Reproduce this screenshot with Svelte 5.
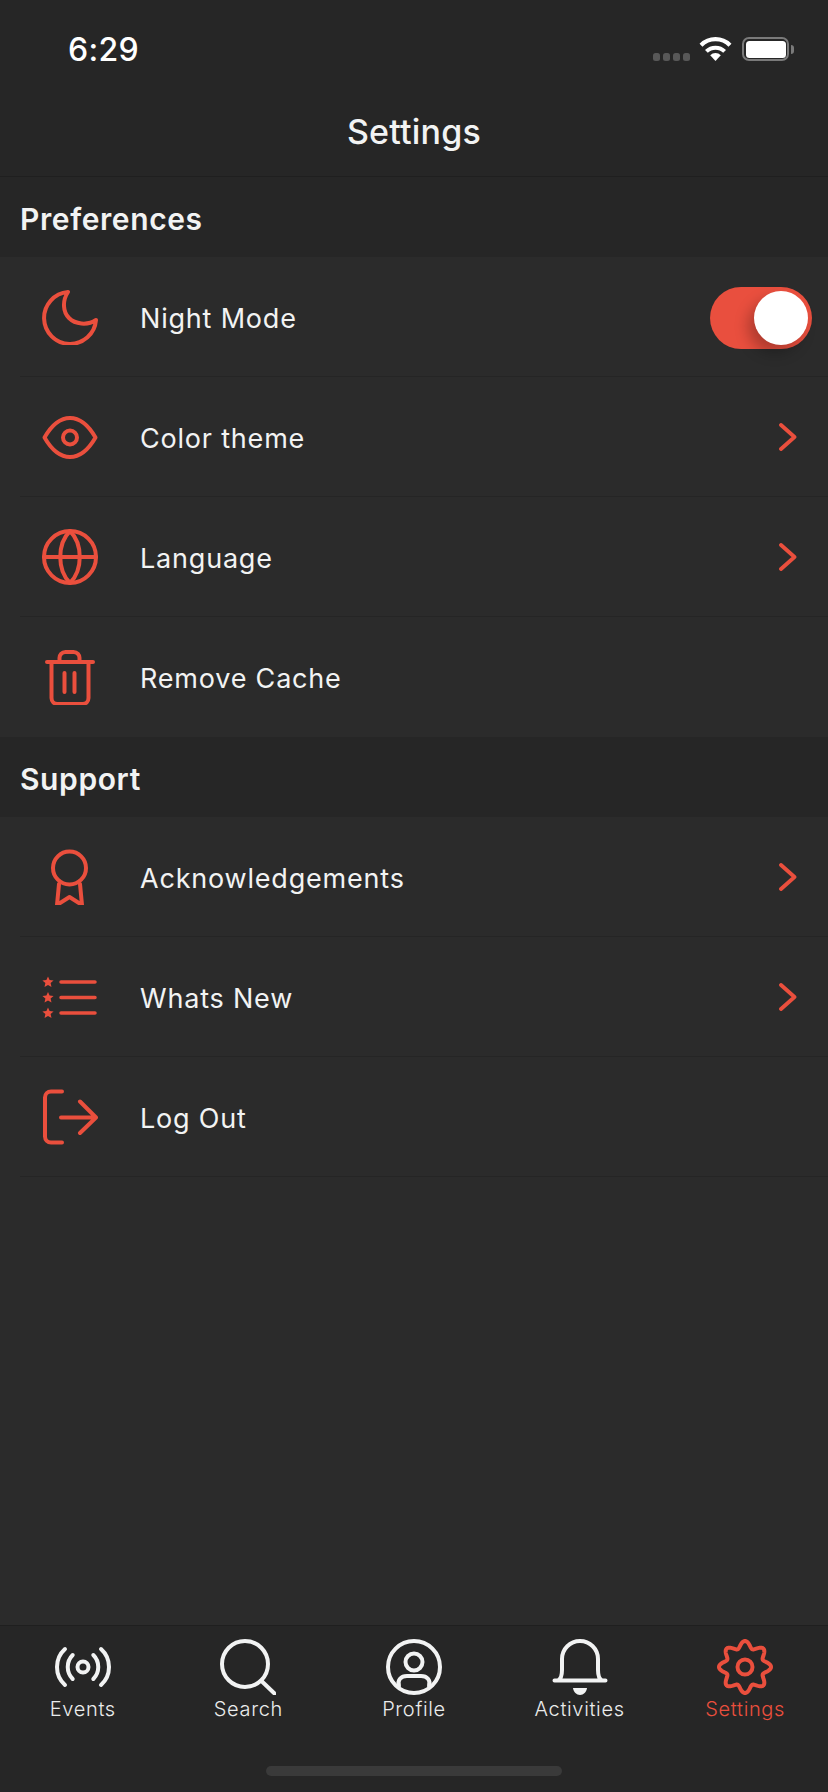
<script>
  const pts = [];
  const N = 240;
  for (let i = 0; i < N; i++) {
    const t = (i / N) * Math.PI * 2;
    const c = Math.cos(8 * t);
    const r = 22.6 + 3.4 * c;
    pts.push(`${(28 + r * Math.sin(t)).toFixed(2)} ${(28 - r * Math.cos(t)).toFixed(2)}`);
  }
  const gear = 'M' + pts.join('L') + 'Z';

  const groups = [
    {
      title: 'Preferences',
      rows: [
        { id: 'moon', label: 'Night Mode', toggle: true },
        { id: 'eye', label: 'Color theme', chevron: true },
        { id: 'globe', label: 'Language', chevron: true },
        { id: 'trash', label: 'Remove Cache' }
      ]
    },
    {
      title: 'Support',
      rows: [
        { id: 'ribbon', label: 'Acknowledgements', chevron: true },
        { id: 'list', label: 'Whats New', chevron: true },
        { id: 'logout', label: 'Log Out' }
      ]
    }
  ];
  const tabs = ['Events', 'Search', 'Profile', 'Activities', 'Settings'];
  const star = 'M0 -5.6L1.6 -1.9L5.6 -1.6L2.6 1L3.5 5L0 2.9L-3.5 5L-2.6 1L-5.6 -1.6L-1.6 -1.9Z';
</script>

<div class="screen">
  <header class="top">
    <div class="status">
      <span class="time">6:29</span>
      <div class="status-icons">
        <div class="dots"><i></i><i></i><i></i><i></i></div>
        <svg class="wifi" width="33" height="24" viewBox="0 0 33 24">
          <path d="M16.5 24L11.2 18.2A7.8 7.8 0 0 1 21.8 18.2Z" fill="#fff" />
          <path d="M7.4 14.4A13 13 0 0 1 25.6 14.4" fill="none" stroke="#fff" stroke-width="4" />
          <path d="M2 8.200A20.5 20.5 0 0 1 31 8.200" fill="none" stroke="#fff" stroke-width="4.200" />
        </svg>
        <div class="battery"><div class="charge"></div></div>
        <div class="nub"></div>
      </div>
    </div>
    <h1>Settings</h1>
  </header>

  <main>
    {#each groups as g}
      <section>
        <h2>{g.title}</h2>
        {#each g.rows as r}
          <div class="row">
            <svg class="icon" width="56" height="56" viewBox="0 0 56 56">
              {#if r.id === 'moon'}
                <path d="M26 3A26 26 0 1 0 54 31C45 37 33 35 27 29C21 23 20 12 26 3Z" />
              {:else if r.id === 'eye'}
                <path d="M2.500 28.500C10 15.500 18 9 28 9S46 15.500 53.500 28.500C46 41.500 38 48 28 48S10 41.500 2.500 28.500Z" />
                <circle cx="28" cy="28.500" r="7" />
              {:else if r.id === 'globe'}
                <circle cx="28" cy="28" r="26" />
                <path d="M2 28H54M28 2C15 15 15 41 28 54C41 41 41 15 28 2Z" />
              {:else if r.id === 'trash'}
                <path d="M5 13H51M17.500 13V9.500A6 6 0 0 1 23.500 3H31.500A6 6 0 0 1 37.500 9.500V13M9.500 13V49A6 6 0 0 0 15.500 55H40.500A6 6 0 0 0 46.500 49V13M22.500 24V43M32.500 24V43" />
              {:else if r.id === 'ribbon'}
                <circle cx="27.500" cy="19" r="16.500" />
                <path d="M17 35L15 56L27.500 48L40 56L38 35" />
              {:else if r.id === 'list'}
                <path d="M19 13H53M19 28.500H53M19 44H53" class="thin" />
                <path d={star} class="solid" transform="translate(6 13)" />
                <path d={star} class="solid" transform="translate(6 28.500)" />
                <path d={star} class="solid" transform="translate(6 44)" />
              {:else if r.id === 'logout'}
                <path d="M20 2.500H9A6 6 0 0 0 3 8.500V47.500A6 6 0 0 0 9 53.500H20M19 28.500H53M38 12.500L54 28.500L38 44" />
              {/if}
            </svg>
            <span class="label">{r.label}</span>
            {#if r.toggle}
              <div class="switch"><div class="knob"></div></div>
            {/if}
            {#if r.chevron}
              <svg class="chev" width="18" height="28" viewBox="0 0 18 28">
                <path d="M2 2L15.500 14L2 26" />
              </svg>
            {/if}
          </div>
        {/each}
      </section>
    {/each}
  </main>

  <nav class="tabbar">
    <div class="tabs">
      {#each tabs as t, i}
        <div class="tab" class:active={i === 4}>
          <svg width="56" height="56" viewBox="0 0 56 56">
            {#if i === 0}
              <circle cx="28" cy="28" r="5.500" />
              <path d="M10 10A24.250 24.250 0 0 0 10 46M46 10A24.250 24.250 0 0 1 46 46M17.700 16A17 17 0 0 0 17.700 40M38.300 16A17 17 0 0 1 38.300 40" />
            {:else if i === 1}
              <circle cx="25" cy="25" r="23" />
              <path d="M42 42.500L54.500 54.500" />
            {:else if i === 2}
              <circle cx="28" cy="28" r="26" />
              <circle cx="28" cy="23" r="8.500" />
              <path d="M13 47C11 41 15 37 21 37H35C41 37 45 41 43 47" />
            {:else if i === 3}
              <path d="M2.500 41.500H53.500M6 41.500C9 40 10 36 10 31V20A18 18 0 0 1 46 20V31C46 36 47 40 50 41.500" />
              <path d="M21 49H35C34.500 53 31.500 56 28 56S21.500 53 21 49Z" class="solid" />
            {:else}
              <path d={gear} />
              <circle cx="28" cy="28" r="7.500" />
            {/if}
          </svg>
          <span>{t}</span>
        </div>
      {/each}
    </div>
    <div class="home"></div>
  </nav>
</div>

<style>
  :global(body) {
    margin: 0;
    background: #2b2b2b;
  }
  .screen {
    width: 828px;
    height: 1792px;
    display: flex;
    flex-direction: column;
    background: #2b2b2b;
    color: #f2f3f3;
    font-family: Inter, "Noto Sans", sans-serif;
    overflow: hidden;
  }
  .top {
    height: 176px;
    background: #262626;
    border-bottom: 1px solid #1f1f1f;
    box-sizing: content-box;
    display: flex;
    flex-direction: column;
  }
  .status {
    height: 100px;
    display: flex;
    align-items: flex-start;
    justify-content: space-between;
  }
  .time {
    margin: 30px 0 0 68px;
    font-size: 32px;
    line-height: 40px;
    font-weight: 500;
    color: #fff;
    letter-spacing: 0.3px;
  }
  .status-icons {
    display: flex;
    align-items: flex-start;
    margin: 37px 34px 0 0;
  }
  .dots {
    display: flex;
    gap: 3px;
    margin: 16px 9px 0 0;
  }
  .dots i {
    display: block;
    width: 7px;
    height: 8px;
    border-radius: 2.500px;
    background: #585858;
  }
  .battery {
    width: 47px;
    height: 24px;
    margin-left: 10px;
    box-sizing: border-box;
    border: 2.500px solid #7a7a7a;
    border-radius: 7px;
    padding: 1.500px;
    display: flex;
  }
  .charge {
    flex: 1;
    background: #fff;
    border-radius: 3.500px;
  }
  .nub {
    width: 3px;
    height: 9px;
    margin: 8px 0 0 2px;
    background: #7a7a7a;
    border-radius: 0 3px 3px 0;
  }
  h1 {
    margin: 12px 0 0;
    text-align: center;
    font-size: 34px;
    line-height: 40px;
    font-weight: 500;
    letter-spacing: 0.2px;
    color: #f2f3f3;
  }
  main {
    flex: 1;
  }
  h2 {
    margin: 0;
    height: 80px;
    box-sizing: border-box;
    background: #262626;
    padding: 4px 0 0 20px;
    font-size: 30px;
    line-height: 76px;
    font-weight: 600;
    letter-spacing: 0.6px;
  }
  .row {
    height: 120px;
    margin-left: 20px;
    border-bottom: 1px solid #252525;
    box-sizing: border-box;
    display: flex;
    align-items: center;
    padding: 0 31px 0 22px;
  }
  section .row:last-child {
    border-bottom-color: transparent;
  }
  section:last-child .row:last-child {
    border-bottom-color: #252525;
  }
  .icon,
  .tab svg {
    flex: none;
    fill: none;
    stroke-width: 4;
    stroke-linecap: round;
    stroke-linejoin: round;
  }
  .icon {
    margin-top: 1px;
  }
  .icon,
  .chev {
    stroke: #ea4f3d;
  }
  .icon .thin {
    stroke-width: 3.500;
  }
  .solid {
    stroke: none;
    fill: #ea4f3d;
  }
  .label {
    margin-left: 42px;
    padding-top: 5px;
    flex: 1;
    font-size: 27px;
    letter-spacing: 0.8px;
    line-height: 40px;
  }
  .chev {
    fill: none;
    stroke-width: 3.800;
    stroke-linecap: round;
    stroke-linejoin: round;
  }
  .switch {
    position: relative;
    width: 102px;
    height: 62px;
    margin: 3px -15px 0 0;
    border-radius: 31px;
    background: #e94f3e;
  }
  .knob {
    position: absolute;
    top: 4px;
    right: 4px;
    width: 54px;
    height: 54px;
    border-radius: 50%;
    background: #fff;
    box-shadow: -6px 8px 14px rgba(0, 0, 0, 0.25);
  }
  .tabbar {
    height: 167px;
    background: #262626;
    border-top: 1px solid #1f1f1f;
    box-sizing: border-box;
    padding-top: 13px;
    display: flex;
    flex-direction: column;
    align-items: center;
  }
  .tabs {
    width: 100%;
    display: grid;
    grid-template-columns: repeat(5, 1fr);
  }
  .tab {
    display: flex;
    flex-direction: column;
    align-items: center;
    font-size: 20px;
    font-weight: 350;
    letter-spacing: 0.65px;
    line-height: 28px;
    color: #ebecec;
  }
  .tab svg {
    stroke: #f2f3f3;
  }
  .tab .solid {
    stroke: none;
    fill: #f2f3f3;
  }
  .tab.active {
    color: #ea4f3d;
  }
  .tab.active svg {
    stroke: #ea4f3d;
  }
  .home {
    width: 296px;
    height: 10px;
    margin-top: 43px;
    border-radius: 5px;
    background: #3a3a3a;
  }
</style>
